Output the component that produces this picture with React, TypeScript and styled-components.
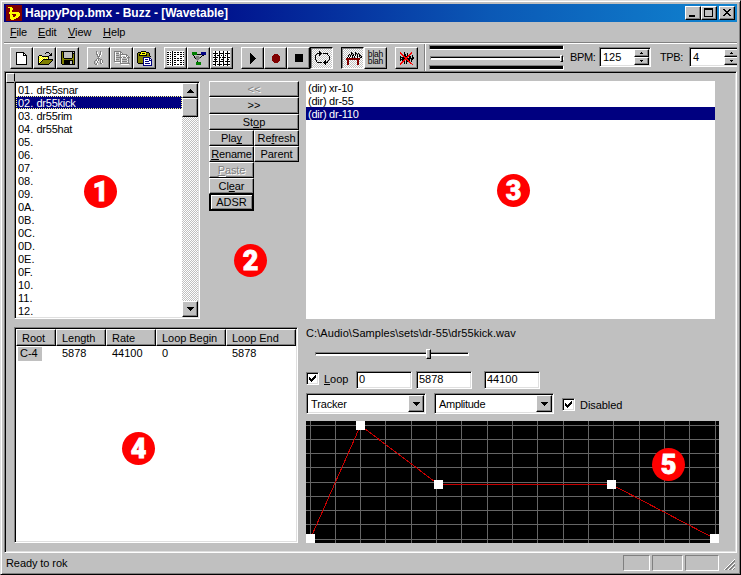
import React from "react";
import styled, { createGlobalStyle, css } from "styled-components";

const FACE = "#c0c0c0";
const NAVY = "#000080";

const Global = createGlobalStyle`
  * { box-sizing: border-box; }
  body { margin: 0; background: ${FACE}; }
  body, button, input { font: 11px/13px "Liberation Sans", Arial, sans-serif; color: #000; }
`;

const raised = css`
  border: 1px solid;
  border-color: #fff #000 #000 #fff;
  box-shadow: inset -1px -1px #808080;
  background: ${FACE};
`;
const sunken = css`
  border: 1px solid;
  border-color: #808080 #fff #fff #808080;
  box-shadow: inset 1px 1px #000, inset -1px -1px #dfdfdf;
`;

const Window = styled.div`
  width: 741px;
  height: 575px;
  padding: 2px 2px 1px 2px;
  border: 1px solid;
  border-color: #dfdfdf #000 #000 #dfdfdf;
  box-shadow: inset 1px 1px #fff, inset -1px -1px #808080;
  background: ${FACE};
  display: flex;
  flex-direction: column;
  overflow: hidden;
  position: relative;
  white-space: nowrap;
`;
const Inner = styled.div`
  display: flex;
  flex-direction: column;
  padding: 1px 0 0 1px;
  width: 734px;
`;
const TitleBar = styled.div`
  height: 18px;
  display: flex;
  align-items: center;
  padding: 0 2px;
  background: linear-gradient(90deg, #000080 0%, #00108c 28%, #0b58b5 66%, #1084d0 100%);
`;
const Title = styled.div`
  flex: 1;
  padding-left: 3px;
  color: #fff;
  font-weight: bold;
  font-size: 12px;
  letter-spacing: -0.02px;
`;
const Caption = styled.button<{ $gap?: boolean }>`
  width: 16px;
  height: 14px;
  padding: 0;
  ${raised}
  margin-left: ${(p) => (p.$gap ? 2 : 0)}px;
  display: flex;
`;
const MenuBar = styled.div`
  height: 20px;
  display: flex;
`;
const MenuItem = styled.div<{ $w: number; $ls?: number }>`
  width: ${(p) => p.$w}px;
  padding: 4px 0 0 6px;
  letter-spacing: ${(p) => p.$ls ?? 0}px;
`;
const U = styled.span`
  text-decoration: underline;
  text-underline-offset: 1px;
  text-decoration-thickness: 1px;
  text-decoration-skip-ink: none;
`;
const ToolBar = styled.div`
  height: 29px;
  border-top: 1px solid #808080;
  box-shadow: inset 0 1px #fff;
  padding: 4px 0 0 6px;
  display: flex;
  overflow: hidden;
`;
const Group = styled.div`
  display: flex;
  flex: none;
  margin-right: 8px;
`;
const Tool = styled.div<{ $down?: boolean }>`
  width: 23px;
  height: 22px;
  flex: none;
  ${raised}
  ${(p) =>
    p.$down &&
    css`
      border-color: #000 #fff #fff #000;
      box-shadow: inset 1px 1px #808080;
      background: repeating-conic-gradient(#fff 0 25%, ${FACE} 0 50%) 0 0 / 2px 2px;
    `}
  display: flex;
  align-items: center;
  justify-content: center;
  svg { transform: ${(p) => (p.$down ? "translate(1px, 0)" : "none")}; }
`;
const Divider = styled.div`
  width: 2px;
  flex: none;
  height: 28px;
  margin: -3px 3px 0 -2px;
  border-left: 1px solid #808080;
  border-right: 1px solid #fff;
`;
const Meters = styled.div`
  width: 135px;
  flex: none;
  height: 25px;
  margin-top: -2px;
  display: flex;
  flex-direction: column;
  justify-content: space-between;
`;
const Meter = styled.div`
  height: 5px;
  background: #000;
  border: 1px solid;
  border-color: #808080 #fff #fff #808080;
`;
const Track = styled.div<{ $w?: number }>`
  width: ${(p) => p.$w ?? 134}px;
  height: 4px;
  margin-left: 1px;
  background: #000;
  border: 1px solid;
  border-color: #808080 #fff #fff #808080;
  background: linear-gradient(#000 1px, #fff 1px);
  position: relative;
`;
const Thumb = styled.div<{ $x: number; $w: number; $h: number; $y: number }>`
  position: absolute;
  left: ${(p) => p.$x}px;
  top: ${(p) => p.$y}px;
  width: ${(p) => p.$w}px;
  height: ${(p) => p.$h}px;
  ${raised}
`;
const SpinLabel = styled.div<{ $l: number; $w: number }>`
  margin-left: ${(p) => p.$l}px;
  width: ${(p) => p.$w}px;
  flex: none;
  padding-top: 4px;
  letter-spacing: -0.35px;
`;
const SpinBox = styled.div`
  width: 52px;
  height: 20px;
  flex: none;
  ${sunken}
  background: #fff;
  display: flex;
  padding: 1px;
`;
const SpinValue = styled.div`
  flex: 1;
  padding: 2px 0 0 2px;
`;
const SpinButtons = styled.div`
  width: 15px;
  display: grid;
  grid-template-rows: 8px 8px;
`;
const SpinButton = styled.div`
  ${raised}
  display: flex;
  align-items: center;
  justify-content: center;
`;
const Frame = styled.div`
  width: 733px;
  height: 482px;
  border: 1px solid;
  border-color: #808080 #fff #fff #808080;
  box-shadow: inset 1px 1px #000, inset -1px -1px #dfdfdf;
  padding: 1px;
  display: flex;
`;
const Gutter = styled.div`
  width: 8px;
`;
const Corner = styled.div`
  width: 9px;
  height: 10px;
  border: 1px solid;
  border-color: #fff #000 #000 #fff;
`;
const Body = styled.div`
  padding-top: 8px;
  display: flex;
  flex-direction: column;
  gap: 8px;
`;
const Upper = styled.div`
  display: flex;
`;
const Lower = styled.div`
  display: flex;
  gap: 8px;
`;
const WaveList = styled.div`
  width: 186px;
  height: 238px;
  ${sunken}
  background: #fff;
  padding: 1px;
  display: flex;
`;
const Rows = styled.div`
  flex: 1;
`;
const Row = styled.div<{ $sel?: boolean; $focus?: boolean }>`
  height: 13px;
  padding-left: 2px;
  line-height: 15px;
  letter-spacing: -0.25px;
  display: flex;
  ${(p) => p.$sel && css`background: ${NAVY}; color: #fff;`}
  ${(p) => p.$focus && css`outline: 1px dotted #ffff7f; outline-offset: -1px;`}
`;
const Index = styled.span`
  width: 18.5px;
  letter-spacing: 0;
`;
const ScrollBar = styled.div`
  width: 16px;
  display: flex;
  flex-direction: column;
  background: repeating-conic-gradient(#fff 0 25%, ${FACE} 0 50%) 0 0 / 2px 2px;
`;
const ScrollPart = styled.div<{ $h: number; $end?: boolean }>`
  height: ${(p) => p.$h}px;
  margin-top: ${(p) => (p.$end ? "auto" : 0)};
  ${raised}
  display: flex;
  align-items: center;
  justify-content: center;
`;
const Commands = styled.div`
  width: 90px;
  margin: 0 7px 0 9px;
  display: grid;
  grid-template-columns: 45px 45px;
  grid-template-rows: 16px 17px 16px 16px 16px 16px 16px 17px;
  align-content: start;
`;
const Command = styled.button<{ $wide?: boolean; $off?: boolean; $main?: boolean; $ls?: number }>`
  grid-column: ${(p) => (p.$wide ? "1 / 3" : "auto")};
  padding: 0;
  ${raised}
  line-height: 13px;
  letter-spacing: ${(p) => p.$ls ?? 0}px;
  display: flex;
  align-items: center;
  justify-content: center;
  ${(p) => p.$off && css`color: #808080; text-shadow: 1px 1px #fff;`}
  ${(p) => p.$main && css`border: 2px solid #000; border-top-width: 1px; box-shadow: inset 1px 1px #fff, inset -1px -1px #808080;`}
`;
const Blank = styled.div``;
const FileList = styled.div`
  width: 409px;
  height: 238px;
  background: #fff;
`;
const Table = styled.div`
  width: 284px;
  height: 216px;
  ${sunken}
  background: #fff;
  padding: 1px;
`;
const TableRow = styled.div`
  display: grid;
  grid-template-columns: 40px 50px 50px 70px 70px;
`;
const Head = styled.div`
  height: 17px;
  ${raised}
  padding: 2px 0 0 5px;
  letter-spacing: -0.05px;
`;
const Cell = styled.div`
  padding: 1px 0 0 6px;
  height: 15px;
`;
const RootCell = styled.div`
  margin: 1px 0 0 2px;
  width: 24px;
  height: 14px;
  padding-left: 2px;
  background: ${FACE};
`;
const Editor = styled.div`
  width: 413px;
  display: flex;
  flex-direction: column;
`;
const Path = styled.div`
  height: 25px;
  letter-spacing: 0.08px;
`;
const Line = styled.div<{ $h: number; $t?: number }>`
  height: ${(p) => p.$h}px;
  margin-top: ${(p) => p.$t ?? 0}px;
  display: flex;
  align-items: flex-start;
`;
const Slider = styled.div`
  padding-left: 8px;
  height: 20px;
`;
const Check = styled.div`
  width: 13px;
  height: 13px;
  ${sunken}
  background: #fff;
  display: flex;
  align-items: center;
  justify-content: center;
`;
const CheckLabel = styled.div<{ $w?: number }>`
  margin-left: 5px;
  padding-top: 1px;
  width: ${(p) => p.$w ?? 60}px;
  letter-spacing: -0.05px;
`;
const Field = styled.div<{ $gap: number }>`
  width: 56px;
  height: 18px;
  margin: -1px ${(p) => p.$gap}px 0 0;
  ${sunken}
  background: #fff;
  padding: 1px 0 0 2px;
`;
const Select = styled.div<{ $ls: number }>`
  width: 120px;
  height: 21px;
  margin-right: 8px;
  ${sunken}
  background: #fff;
  padding: 1px 1px 1px 4px;
  display: flex;
  justify-content: space-between;
  line-height: 19px;
  letter-spacing: ${(p) => p.$ls}px;
`;
const Drop = styled.div`
  width: 16px;
  height: 17px;
  ${raised}
  display: flex;
  align-items: center;
  justify-content: center;
`;
const Status = styled.div`
  height: 20px;
  display: flex;
  align-items: flex-start;
  padding-top: 2px;
`;
const Ready = styled.div`
  width: 619px;
  padding: 2px 0 0 2px;
  letter-spacing: -0.08px;
`;
const Pane = styled.div<{ $w: number }>`
  width: ${(p) => p.$w}px;
  height: 16px;
  flex: none;
  margin-right: 2px;
  border: 1px solid;
  border-color: #808080 #fff #fff #808080;
`;
const Badge = styled.div<{ $x: number; $y: number }>`
  position: absolute;
  left: ${(p) => p.$x - 17}px;
  top: ${(p) => p.$y - 17}px;
  width: 33px;
  height: 33px;
  border-radius: 50%;
  background: #f00;
  color: #fff;
  font: 900 27px/34px Roboto, "Liberation Sans", sans-serif;
  text-align: center;
  -webkit-text-stroke: 0.8px #fff;
`;

const INK: Record<string, string> = {
  k: "#000", w: "#fff", g: "#808080", y: "#ffff00", o: "#808000", r: "#800000",
  R: "#f00", b: "#000080", n: "#008000", c: "#c0c0c0", p: "#ffff99",
};
/* Draws a small bitmap, one character to a pixel; a space is transparent. */
function Pixmap({ rows }: { rows: string[] }) {
  const w = Math.max(...rows.map((r) => r.length));
  const parts: React.ReactNode[] = [];
  rows.forEach((row, y) => {
    for (let x = 0; x < row.length; ) {
      const ch = row[x];
      let e = x + 1;
      while (row[e] === ch) e++;
      if (INK[ch]) parts.push(<rect key={`${x}-${y}`} x={x} y={y} width={e - x} height={1} fill={INK[ch]} />);
      x = e;
    }
  });
  return <Bitmap width={w} height={rows.length} shapeRendering="crispEdges">{parts}</Bitmap>;
}
const Bitmap = styled.svg`
  flex: none;
`;

const PAGE = ["kkkkkkkk   ", "kwwwwwwkk  ", "kwwwwwwkwk ", "kwwwwwwkkkk", "kwwwwwwwwwk", "kwwwwwwwwwk", "kwwwwwwwwwk", "kwwwwwwwwwk", "kwwwwwwwwwk", "kwwwwwwwwwk", "kwwwwwwwwwk", "kwwwwwwwwwk", "kkkkkkkkkkk"];
const OPEN = ["         kkk    ", "        k   k k ", "             kk ", "  kkk       kkk ", " kpypkkkkkkk    ", " kypypypypyk    ", " kpypypypypk    ", " kypypkkkkkkkkkk", " kpypkoooooooook", " kypkoooooooook ", " kpkoooooooook  ", " kkoooooooook   ", " kkkkkkkkkkk    "];
const SAVE = ["kkkkkkkkkkkkkk", "kokcccccccckck", "kokcccccccckkk", "kokcccccccckok", "kokcccccccckok", "kokcccccccckok", "kokcccccccckok", "kookkkkkkkkook", "kooooooooooook", "kookkkkkkkkkok", "kookkkkkkcckok", "kookkkkkkcckok", "kookkkkkkcckok", " kkkkkkkkkkkkk"];
const CUT = ["  g   g  ", "  gw  gw ", "  gw  gw ", "  ggwggw ", "   gwgw  ", "   gggw  ", "    gw   ", "   ggg   ", "  gwg gg ", " ggwg gwg", "g wgw gwg", "g wg  gwg", "g gw  ggw", " ggw     "];
const COPY = ["ggggggg        ", "gw   wgg       ", "gwgggwgwg      ", "gw    ggggggg  ", "gwggg gwwwwwgg ", "gw    gw   wgwg", "gwggggggwgggwggg", "gw    gw      g", "gwggg gwgggggwg", "gw    gw      g", "gggggggwgggggwg", " wwwwwgw      g", "      gggggggggg", "       wwwwwwww"];
const PASTE = ["    kkkkk     ", " kkkyyyyykkk  ", "kookykkkyoook ", "kokyyyyyykook ", "kokkkkkkkkook ", "kooooooooooook", "kooooobbbbbbb ", "kooooobwwwwwbb", "kooooobwbbbwbwb", "kooooobwwwwwbbb", "kooooobwbbbbwwb", "kooooobwwwwwwwb", " kkkkkbwbbbbbwb", "      bwwwwwwwb", "      bbbbbbbbb"];
const PATTERN = ["wwwwwkwwwwwwwwwww", "kkwkwkwkkwkkwkkwk", "wwwwwkwwwwwwwwwww", "kkwkwkwkkwkkwkkwk", "wwwwwkwwwwwwwwwww", "kkwkwkwkkwwwwkkwk", "wwwwwkwwwwwwwwwww", "kkwkwkwkkwkkwkkww", "wwwwwkwwwwwwwwwww", "kkwkwkwkkwkkwkkwk", "wwwwwkwwwwwwwwwww", "kkwkwkwkkwwwwkkwk", "wwwwwkwwwwwwwwwww", "kkwkwkwkkwkkwkkwk", "wwwwwkwwwwwwwwwww"];
const MACHINES = ["nnnnn    bbbbb", "nnnnn    bbbbb", "nnnnnkkkkbbbbb", " k        kk  ", "  k ggg  k    ", "  kgggggk     ", "   kgggg      ", "    ggg       ", "     g        ", "     k        ", "    nnnnn     ", "    nnnnn     ", "    nnnnn     "];
const SEQ = ["wwkwwwkwwwkwwwkww", "wwkwwwkwwwkwwwkww", "kkkkkwkkkkkwkkkkk", "wwkwwwkwwwkwwwkww", "wkkwkkkwkwkwkwkww", "wwkwwwkwwwkwwwkww", "kkkkkwkkwkkkkwkkk", "wwkwwwkwwwkwwwkww", "wkkkwwkwkkkwwwkkw", "wwkwwwkwwwkwwwkww", "kkkkkwkkkkkwkkkkk", "wwkwwwkwwwkwwwkww", "wwkwwwkwwwkwwwkww", "kkkwkkkkkwkkkkkkk", "wwkwwwkwwwkwwwkww"];
const PLAY = ["k     ", "kk    ", "kkk   ", "kkkk  ", "kkkkk ", "kkkkkk", "kkkkk ", "kkkk  ", "kkk   ", "kk    ", "k     "];
const REC = ["  rrrr  ", " rrrrrr ", "rrrrrrrr", "rrrrrrrr", "rrrrrrrr", "rrrrrrrr", "rrrrrrrr", " rrrrrr ", "  rrrr  "];
const STOP = Array(8).fill("kkkkkkkk");
const LOOP = ["    k          ", "    kk         ", "  kkkkk kkkkk  ", " k  kk      k  ", "k   k        k ", "k             k", "k             k", "k             k", "k             k", " k        k  k ", " k       kk k  ", "  kkkkk kkkkk  ", "         kk    ", "          k    "];
const MACHTABLE = ["     k   k      ", "     kk  kk k   ", "   k k k k k k  ", "  k k kk k k kk ", "  k k k k  k k k", " k k  k k  k  kk", "rrrrrrrrrrrrrr  ", "rrrrrrrrrrrrrr  ", " rr        rr   ", " rr        rr   ", " rr        rr   ", " rr        rr   ", " rr        rr   "];
const MUTE = ["R   k      R  ", "RR  k  k  RR  ", " RR kk k RR   ", "  RRkk kRR  k ", "k  RRkkRRkk k ", "kkkkRRRR kk kk", "k kkkRRkkkkkkk", "kkkkRRRRkk kk ", "k kRR kRRk k  ", "  RRk kkRR k  ", " RR k k  RR   ", "RR  k k   RR  ", "R           R "];
const LOGO = ["yyyy        ", "  yyy       ", "  yyy       ", "  yy        ", "  yy        ", " yyyyyyyyyy ", " yyyyyyyyyyy", "  yy    yyyy", "  yyy   yyyy", "  yyy  yyyy ", "  yyyyyyyy  ", "  yyyyyy    ", "   yyy      "];
const UP = ["   k   ", "  kkk  ", " kkkkk ", "kkkkkkk"];
const DOWN = [...UP].reverse();
const TINY_UP = [" k ", "kkk"];
const TINY_DOWN = ["kkk", " k "];
const TICK = ["      k", "     kk", "k   kkk", "kk kkk ", "kkkkk  ", " kkk   ", "  k    "];

const Logo = styled.div`
  width: 16px;
  height: 16px;
  background: #800000;
  display: flex;
  align-items: center;
  justify-content: center;
`;
const Blah = styled.div`
  font: 8.5px/7px "Liberation Sans", sans-serif;
  letter-spacing: -0.2px;
  text-align: center;
  white-space: pre;
`;
const CaptionGlyph = styled.span<{ $kind: "min" | "max" }>`
  ${(p) =>
    p.$kind === "min"
      ? css`width: 6px; height: 2px; margin: 8px 0 0 3px; background: #000;`
      : css`width: 9px; height: 9px; margin: 1px 0 0 2px; border: 1px solid #000; border-top-width: 2px;`}
`;
const Plot = styled.svg`
  display: block;
  background: #000;
`;
const Grip = styled.svg`
  flex: none;
  margin-left: 0;
`;

function Spin({ value }: { value: string }) {
  return (
    <SpinBox>
      <SpinValue>{value}</SpinValue>
      <SpinButtons>
        <SpinButton><Pixmap rows={TINY_UP} /></SpinButton>
        <SpinButton><Pixmap rows={TINY_DOWN} /></SpinButton>
      </SpinButtons>
    </SpinBox>
  );
}

const VX = [4, 29, 54, 79, 105, 130, 155, 181, 206, 231, 257, 282, 307, 333, 358, 383, 409];
const HY = [4, 18, 32, 46, 61, 75, 89, 103, 118];
const POINTS = [[4, 117], [54, 4], [132, 63], [305, 63], [408, 117]];

function Envelope() {
  return (
    <Plot width={413} height={122} shapeRendering="crispEdges">
      {VX.map((x) => <rect key={x} x={x} y={0} width={1} height={122} fill="#666" />)}
      {HY.map((y) => <rect key={y} x={0} y={y} width={413} height={1} fill="#666" />)}
      <polyline points={POINTS.map(([x, y]) => `${x + 0.5},${y + 0.5}`).join(" ")} fill="none" stroke="#c80000" />
      {POINTS.map(([x, y]) => <rect key={x} x={x - 4} y={y - 4} width={9} height={9} fill="#fff" />)}
    </Plot>
  );
}

const WAVES = ["01", "02", "03", "04", "05", "06", "07", "08", "09", "0A", "0B", "0C", "0D", "0E", "0F", "10", "11", "12"];
const NAMES = ["dr55snar", "dr55kick", "dr55rim", "dr55hat"];

export default function App() {
  return (
    <>
      <Global />
      <Window>
        <Inner>
          <TitleBar>
            <Logo><Pixmap rows={LOGO} /></Logo>
            <Title>HappyPop.bmx - Buzz - [Wavetable]</Title>
            <Caption><CaptionGlyph $kind="min" /></Caption>
            <Caption><CaptionGlyph $kind="max" /></Caption>
            <Caption $gap>
              <Bitmap width="14" height="12" shapeRendering="crispEdges"><path d="M3 2h2v1h1v1h2v-1h1v-1h2v1h-1v1h-1v1h-1v1h1v1h1v1h1v1h-2v-1h-1v-1h-2v1h-1v1h-2v-1h1v-1h1v-1h1v-1h-1v-1h-1v-1h-1z" /></Bitmap>
            </Caption>
          </TitleBar>
          <MenuBar>
            <MenuItem $w={28} $ls={-0.2}><U>F</U>ile</MenuItem>
            <MenuItem $w={30} $ls={-0.1}><U>E</U>dit</MenuItem>
            <MenuItem $w={35} $ls={-0.1}><U>V</U>iew</MenuItem>
            <MenuItem $w={40} $ls={-0.05}><U>H</U>elp</MenuItem>
          </MenuBar>
          <ToolBar>
            <Group>
              <Tool><Pixmap rows={PAGE} /></Tool>
              <Tool><Pixmap rows={OPEN} /></Tool>
              <Tool><Pixmap rows={SAVE} /></Tool>
            </Group>
            <Group>
              <Tool><Pixmap rows={CUT} /></Tool>
              <Tool><Pixmap rows={COPY} /></Tool>
              <Tool><Pixmap rows={PASTE} /></Tool>
            </Group>
            <Group>
              <Tool><Pixmap rows={PATTERN} /></Tool>
              <Tool><Pixmap rows={MACHINES} /></Tool>
              <Tool><Pixmap rows={SEQ} /></Tool>
            </Group>
            <Group>
              <Tool><Pixmap rows={PLAY} /></Tool>
              <Tool><Pixmap rows={REC} /></Tool>
              <Tool><Pixmap rows={STOP} /></Tool>
              <Tool $down><Pixmap rows={LOOP} /></Tool>
            </Group>
            <Group>
              <Tool $down><Pixmap rows={MACHTABLE} /></Tool>
              <Tool><Blah>{"blah\nblah"}</Blah></Tool>
            </Group>
            <Group><Tool><Pixmap rows={MUTE} /></Tool></Group>
            <Divider />
            <Meters>
              <Meter />
              <Track><Thumb $x={129} $y={-2} $w={3} $h={7} /></Track>
              <Meter />
            </Meters>
            <SpinLabel $l={6} $w={29}>BPM:</SpinLabel>
            <Spin value="125" />
            <SpinLabel $l={9} $w={29}>TPB:</SpinLabel>
            <Spin value="4" />
          </ToolBar>
          <Frame>
            <Gutter><Corner /></Gutter>
            <Body>
              <Upper>
                <WaveList>
                  <Rows>
                    {WAVES.map((n, i) => (
                      <Row key={n} $sel={i === 1} $focus={i === 1}>
                        <Index>{n}.</Index>{NAMES[i] ?? ""}
                      </Row>
                    ))}
                  </Rows>
                  <ScrollBar>
                    <ScrollPart $h={15}><Pixmap rows={UP} /></ScrollPart>
                    <ScrollPart $h={19} />
                    <ScrollPart $h={16} $end><Pixmap rows={DOWN} /></ScrollPart>
                  </ScrollBar>
                </WaveList>
                <Commands>
                  <Command $wide $off>&lt;&lt;</Command>
                  <Command $wide>&gt;&gt;</Command>
                  <Command $wide>St<U>o</U>p</Command>
                  <Command $ls={-0.1}>Pla<U>y</U></Command>
                  <Command $ls={-0.1}>Re<U>f</U>resh</Command>
                  <Command $ls={-0.15}><U>R</U>ename</Command>
                  <Command $ls={-0.1}>Parent</Command>
                  <Command $off $ls={-0.1}><U>P</U>aste</Command>
                  <Blank />
                  <Command $ls={-0.1}>Cl<U>e</U>ar</Command>
                  <Blank />
                  <Command $main>ADSR</Command>
                </Commands>
                <FileList>
                  <Row>(dir) xr-10</Row>
                  <Row>(dir) dr-55</Row>
                  <Row $sel>(dir) dr-110</Row>
                </FileList>
              </Upper>
              <Lower>
                <Table>
                  <TableRow>
                    <Head>Root</Head><Head>Length</Head><Head>Rate</Head><Head>Loop Begin</Head><Head>Loop End</Head>
                  </TableRow>
                  <TableRow>
                    <RootCell>C-4</RootCell><Cell>5878</Cell><Cell>44100</Cell><Cell>0</Cell><Cell>5878</Cell>
                  </TableRow>
                </Table>
                <Editor>
                  <Path>C:\Audio\Samples\sets\dr-55\dr55kick.wav</Path>
                  <Slider><Track $w={154}><Thumb $x={110} $y={-4} $w={5} $h={10} /></Track></Slider>
                  <Line $h={21}>
                    <Check><Pixmap rows={TICK} /></Check>
                    <CheckLabel $w={32}><U>L</U>oop</CheckLabel>
                    <Field $gap={4}>0</Field>
                    <Field $gap={12}>5878</Field>
                    <Field $gap={0}>44100</Field>
                  </Line>
                  <Line $h={28}>
                    <Select $ls={-0.15}>Tracker<Drop><Pixmap rows={DOWN} /></Drop></Select>
                    <Select $ls={-0.3}>Amplitude<Drop><Pixmap rows={DOWN} /></Drop></Select>
                    <Line $h={14} $t={5}>
                      <Check><Pixmap rows={TICK} /></Check>
                      <CheckLabel>Disabled</CheckLabel>
                    </Line>
                  </Line>
                  <Envelope />
                </Editor>
              </Lower>
            </Body>
          </Frame>
          <Status>
            <Ready>Ready to rok</Ready>
            <Pane $w={27} />
            <Pane $w={31} />
            <Pane $w={34} />
            <Grip width="16" height="16" shapeRendering="crispEdges">
              <path d="M3 15L14 4M7 15L14 8M11 15L14 12" stroke="#fff" />
              <path d="M4 15L14 5M5 15L14 6M8 15L14 9M9 15L14 10M12 15L14 13" stroke="#808080" />
            </Grip>
          </Status>
        </Inner>
        <Badge $x={100} $y={191}>1</Badge>
        <Badge $x={250} $y={260}>2</Badge>
        <Badge $x={513} $y={190}>3</Badge>
        <Badge $x={138} $y={448}>4</Badge>
        <Badge $x={668} $y={464}>5</Badge>
      </Window>
    </>
  );
}
